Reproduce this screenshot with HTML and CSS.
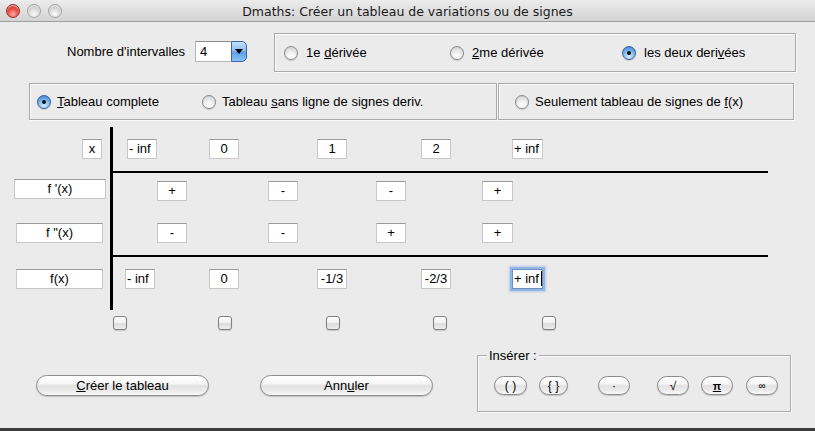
FILE: index.html
```html
<!DOCTYPE html>
<html lang="fr">
<head>
<meta charset="utf-8">
<title>Dmaths</title>
<link rel="stylesheet" href="styles.css">
</head>
<body>
<div class="window">
  <div class="titlebar">
    <div class="lights"><span class="light red"></span><span class="light"></span><span class="light"></span></div>
    <div class="title">Dmaths: Créer un tableau de variations ou de signes</div>
    <div></div>
  </div>

  <div class="row1">
    <span class="lbl-nb">Nombre d'intervalles</span>
    <div class="combo">
      <span class="combo-val">4</span>
      <span class="combo-btn"><svg width="8" height="5" viewBox="0 0 8 5"><path d="M0 0H8L4 5Z" fill="#000"/></svg></span>
    </div>
    <div class="group g1">
      <div class="radio ri1"><span class="rb"></span><span>1e <u>d</u>érivée</span></div>
      <div class="radio ri2"><span class="rb"></span><span><u>2</u>me dérivée</span></div>
      <div class="radio"><span class="rb on"></span><span>les deux deri<u>v</u>ées</span></div>
    </div>
  </div>

  <div class="row2">
    <div class="group g2">
      <div class="radio r2 ri3"><span class="rb on"></span><span><u>T</u>ableau complete</span></div>
      <div class="radio r2"><span class="rb"></span><span>Tableau <u>s</u>ans ligne de signes deriv.</span></div>
    </div>
    <div class="group g3">
      <div class="radio r2"><span class="rb"></span><span>Seulement tableau de signes de <u>f</u>(x)</span></div>
    </div>
  </div>

  <div class="table">
    <div class="trow tr-x">
      <div class="lab"><span class="fld lx">x</span></div>
      <div class="cells vals bb">
        <span class="fld left">- inf</span>
        <span class="fld">0</span>
        <span class="fld">1</span>
        <span class="fld">2</span>
        <span class="fld left w31">+ inf</span>
      </div>
    </div>
    <div class="trow tr-d1">
      <div class="lab"><span class="fld lname l1">f '(x)</span></div>
      <div class="cells signs">
        <span class="fld">+</span>
        <span class="fld">-</span>
        <span class="fld">-</span>
        <span class="fld w31">+</span>
      </div>
    </div>
    <div class="trow tr-d2">
      <div class="lab"><span class="fld lname l2">f "(x)</span></div>
      <div class="cells signs bb">
        <span class="fld">-</span>
        <span class="fld">-</span>
        <span class="fld">+</span>
        <span class="fld w31">+</span>
      </div>
    </div>
    <div class="trow tr-f">
      <div class="lab"><span class="fld lname l2">f(x)</span></div>
      <div class="cells vals fvals">
        <span class="fld left">- inf</span>
        <span class="fld">0</span>
        <span class="fld">-1/3</span>
        <span class="fld">-2/3</span>
        <span class="fld left w31 focus">+ inf<i class="caret"></i></span>
      </div>
    </div>
  </div>

  <div class="checks">
    <span class="cb"></span><span class="cb"></span><span class="cb"></span><span class="cb"></span><span class="cb"></span>
  </div>

  <div class="bottom">
    <div class="btn b-create"><span><u>C</u>réer le tableau</span></div>
    <div class="btn b-cancel"><span>Ann<u>u</u>ler</span></div>
    <div class="insert">
      <span class="legend">Insérer :</span>
      <div class="ibtns">
        <span class="ibtn ib1">( )</span>
        <span class="ibtn ib2">{ }</span>
        <span class="ibtn ib3">·</span>
        <span class="ibtn ib4">√</span>
        <span class="ibtn ib5"><u>π</u></span>
        <span class="ibtn ib6">∞</span>
      </div>
    </div>
  </div>
</div>
</body>
</html>
```

FILE: styles.css
```css
html, body {
  margin: 0;
  padding: 0;
}
body {
  background: #3b3b3b;
  width: 815px;
  height: 431px;
  overflow: hidden;
  font-family: "Liberation Sans", Arial, sans-serif;
  font-size: 13px;
  color: #000;
}
.window {
  width: 815px;
  height: 428px;
  background: #ebebeb;
  display: flex;
  flex-direction: column;
  overflow: hidden;
}

/* title bar */
.titlebar {
  height: 21px;
  flex: none;
  border-bottom: 1px solid #9d9d9d;
  background: linear-gradient(#ececec, #d3d3d3);
  display: grid;
  grid-template-columns: 1fr auto 1fr;
  align-items: center;
}
.lights {
  display: flex;
  gap: 7px;
  padding-left: 6px;
}
.light {
  width: 14px;
  height: 14px;
  border-radius: 50%;
  box-sizing: border-box;
  border: 1px solid #a3a3a3;
  background: radial-gradient(circle at 50% 75%, #fafafa 0%, #dcdcdc 45%, #c2c2c2 80%, #b4b4b4 100%);
  box-shadow: inset 0 1px 1px rgba(255,255,255,0.8);
}
.light.red {
  border-color: #9a2a25;
  background: radial-gradient(circle at 50% 75%, #ffb0a8 0%, #ee5a50 40%, #cc2d24 80%, #a51e18 100%);
}
.title {
  font-family: "DejaVu Sans", "Liberation Sans", sans-serif;
  font-size: 12.5px;
  color: #1a1a1a;
  white-space: nowrap;
  padding-top: 1px;
}

/* row 1 */
.row1 {
  display: flex;
  align-items: center;
  margin-top: 11px;
  height: 39px;
  flex: none;
}
.lbl-nb {
  margin-left: 67px;
  margin-top: -2px;
}
.combo {
  margin-left: 10px;
  margin-top: -2px;
  display: flex;
  height: 21px;
}
.combo-val {
  width: 36px;
  box-sizing: border-box;
  background: #fff;
  border: 1px solid #b5b5b5;
  border-top-color: #8e8e8e;
  border-right: none;
  padding-left: 4px;
  line-height: 19px;
  font-size: 13px;
}
.combo-btn {
  width: 16px;
  box-sizing: border-box;
  border: 1px solid #3c65a8;
  border-radius: 0 5px 5px 0;
  background: linear-gradient(#c7e0fa 0%, #8cbdf0 45%, #5d9ee6 55%, #8dc4f7 100%);
  display: flex;
  align-items: center;
  justify-content: center;
}
.group {
  box-sizing: border-box;
  border: 1px solid #a9a9a9;
  box-shadow: inset 1px 1px 0 #fbfbfb, 1px 1px 0 #f9f9f9;
  display: flex;
  align-items: center;
}
.g1 {
  margin-left: 27px;
  width: 522px;
  height: 39px;
  padding-left: 9px;
}
.radio {
  display: flex;
  align-items: center;
  gap: 8px;
  white-space: nowrap;
}
.radio.r2 {
  gap: 6px;
}
.ri1 { width: 166px; }
.ri2 { width: 172px; }
.ri3 { width: 165px; }
.rb {
  width: 14px;
  height: 14px;
  box-sizing: border-box;
  border-radius: 50%;
  border: 1px solid #8a8a8a;
  background: radial-gradient(circle at 50% 80%, #ffffff 0%, #f0f0f0 40%, #d2d2d2 85%, #c4c4c4 100%);
  box-shadow: 0 1px 1px rgba(0,0,0,0.15);
  position: relative;
  flex: none;
}
.rb.on {
  border-color: #3a5f97;
  background: radial-gradient(circle at 50% 80%, #d6ecff 0%, #8fc3f3 40%, #4f8fdc 80%, #3e7bc9 100%);
}
.rb.on::after {
  content: "";
  position: absolute;
  left: 4px;
  top: 4px;
  width: 4px;
  height: 4px;
  border-radius: 50%;
  background: #111;
}

/* row 2 */
.row2 {
  display: flex;
  margin-top: 11px;
  height: 37px;
  flex: none;
}
.g2 {
  margin-left: 29px;
  width: 468px;
  height: 37px;
  padding-left: 7px;
}
.g3 {
  margin-left: 1px;
  width: 296px;
  height: 37px;
  padding-left: 16px;
}

/* table */
.table {
  margin-top: 7px;
  flex: none;
}
.trow {
  display: flex;
}
.lab {
  width: 110px;
  flex: none;
  display: flex;
  align-items: flex-start;
}
.cells {
  width: 658px;
  flex: none;
  box-sizing: border-box;
  border-left: 3px solid #000;
  display: flex;
  align-items: flex-start;
}
.cells.bb {
  border-bottom: 2px solid #000;
}
.tr-x { height: 46px; }
.tr-x .lab, .tr-x .cells { padding-top: 12px; }
.tr-d1 { height: 39px; }
.tr-d1 .lab { padding-top: 6px; }
.tr-d1 .cells { padding-top: 8px; }
.tr-d2 { height: 45px; }
.tr-d2 .lab, .tr-d2 .cells { padding-top: 11px; }
.tr-f { height: 53px; }
.tr-f .lab, .tr-f .cells { padding-top: 12px; }
.lab, .cells { box-sizing: border-box; }

.fld {
  width: 30px;
  height: 20px;
  box-sizing: border-box;
  background: #fff;
  border: 1px solid #c8c8c8;
  border-top-color: #9b9b9b;
  font-size: 13px;
  line-height: 18px;
  text-align: center;
  white-space: nowrap;
  flex: none;
  position: relative;
}
.fld.left {
  text-align: left;
  padding-left: 1px;
}
.fld.w31 { width: 31px; }
.lx {
  margin-left: 82px;
  width: 20px;
}
.lname.l1 {
  margin-left: 14px;
  width: 92px;
}
.lname.l2 {
  margin-left: 16px;
  width: 87px;
}

.vals > :nth-child(1) { margin-left: 14px; }
.vals > :nth-child(2) { margin-left: 52px; }
.vals > :nth-child(3) { margin-left: 78px; }
.vals > :nth-child(4) { margin-left: 74px; }
.vals > :nth-child(5) { margin-left: 61px; }
.fvals > :nth-child(1) { margin-left: 12px; }
.fvals > :nth-child(2) { margin-left: 54px; }

.signs > :nth-child(1) { margin-left: 44px; }
.signs > :nth-child(2) { margin-left: 81px; }
.signs > :nth-child(3) { margin-left: 78px; }
.signs > :nth-child(4) { margin-left: 76px; }

.focus {
  box-shadow: 0 0 0 2px #92b6e6, 0 0 2px 3px rgba(120,160,220,0.45);
  border-color: #6e8fbf;
}
.caret {
  display: inline-block;
  width: 1px;
  height: 15px;
  background: #000;
  margin-left: 2px;
  vertical-align: -3px;
}

/* checkboxes */
.checks {
  display: flex;
  margin-top: 6px;
  flex: none;
  height: 14px;
}
.cb {
  width: 14px;
  height: 14px;
  box-sizing: border-box;
  border: 1px solid #7e7e7e;
  border-radius: 3px;
  background: linear-gradient(#ffffff 0%, #f2f2f2 45%, #dcdcdc 55%, #ededed 100%);
  box-shadow: 0 1px 1px rgba(0,0,0,0.15);
  flex: none;
}
.cb:nth-child(1) { margin-left: 113px; }
.cb:nth-child(2) { margin-left: 91px; }
.cb:nth-child(3) { margin-left: 94px; }
.cb:nth-child(4) { margin-left: 93px; }
.cb:nth-child(5) { margin-left: 95px; }

/* bottom */
.bottom {
  display: flex;
  align-items: flex-start;
  margin-top: 25px;
  flex: none;
}
.btn {
  margin-top: 20px;
  width: 173px;
  height: 21px;
  box-sizing: border-box;
  border: 1px solid #8b8b8b;
  border-radius: 11px;
  background: linear-gradient(#ffffff 0%, #f6f6f6 40%, #e2e2e2 52%, #ececec 80%, #fafafa 100%);
  box-shadow: 0 1px 1px rgba(0,0,0,0.18);
  display: flex;
  align-items: center;
  justify-content: center;
  font-size: 13px;
}
.b-create { margin-left: 36px; }
.b-cancel { margin-left: 51px; }
.insert {
  margin-left: 44px;
  width: 314px;
  height: 57px;
  box-sizing: border-box;
  border: 1px solid #acacac;
  box-shadow: inset 1px 1px 0 #f8f8f8, 1px 1px 0 #f8f8f8;
  position: relative;
  padding-top: 20px;
}
.legend {
  position: absolute;
  left: 9px;
  top: -8px;
  background: #ebebeb;
  padding: 0 2px;
  font-size: 13px;
  line-height: 15px;
}
.ibtns {
  display: flex;
}
.ibtn {
  width: 32px;
  height: 19px;
  box-sizing: border-box;
  border: 1px solid #8b8b8b;
  border-radius: 10px;
  background: linear-gradient(#ffffff 0%, #f6f6f6 40%, #e2e2e2 52%, #ececec 80%, #fafafa 100%);
  box-shadow: 0 1px 1px rgba(0,0,0,0.18);
  display: flex;
  align-items: center;
  justify-content: center;
  font-size: 12px;
  flex: none;
}
.ib1 { margin-left: 16px; width: 33px; }
.ib2 { margin-left: 12px; width: 29px; }
.ib3 { margin-left: 30px; }
.ib4 { margin-left: 27px; }
.ib5 { margin-left: 12px; font-weight: bold; font-size: 11px; }
.ib6 { margin-left: 13px; font-size: 10px; }
```
